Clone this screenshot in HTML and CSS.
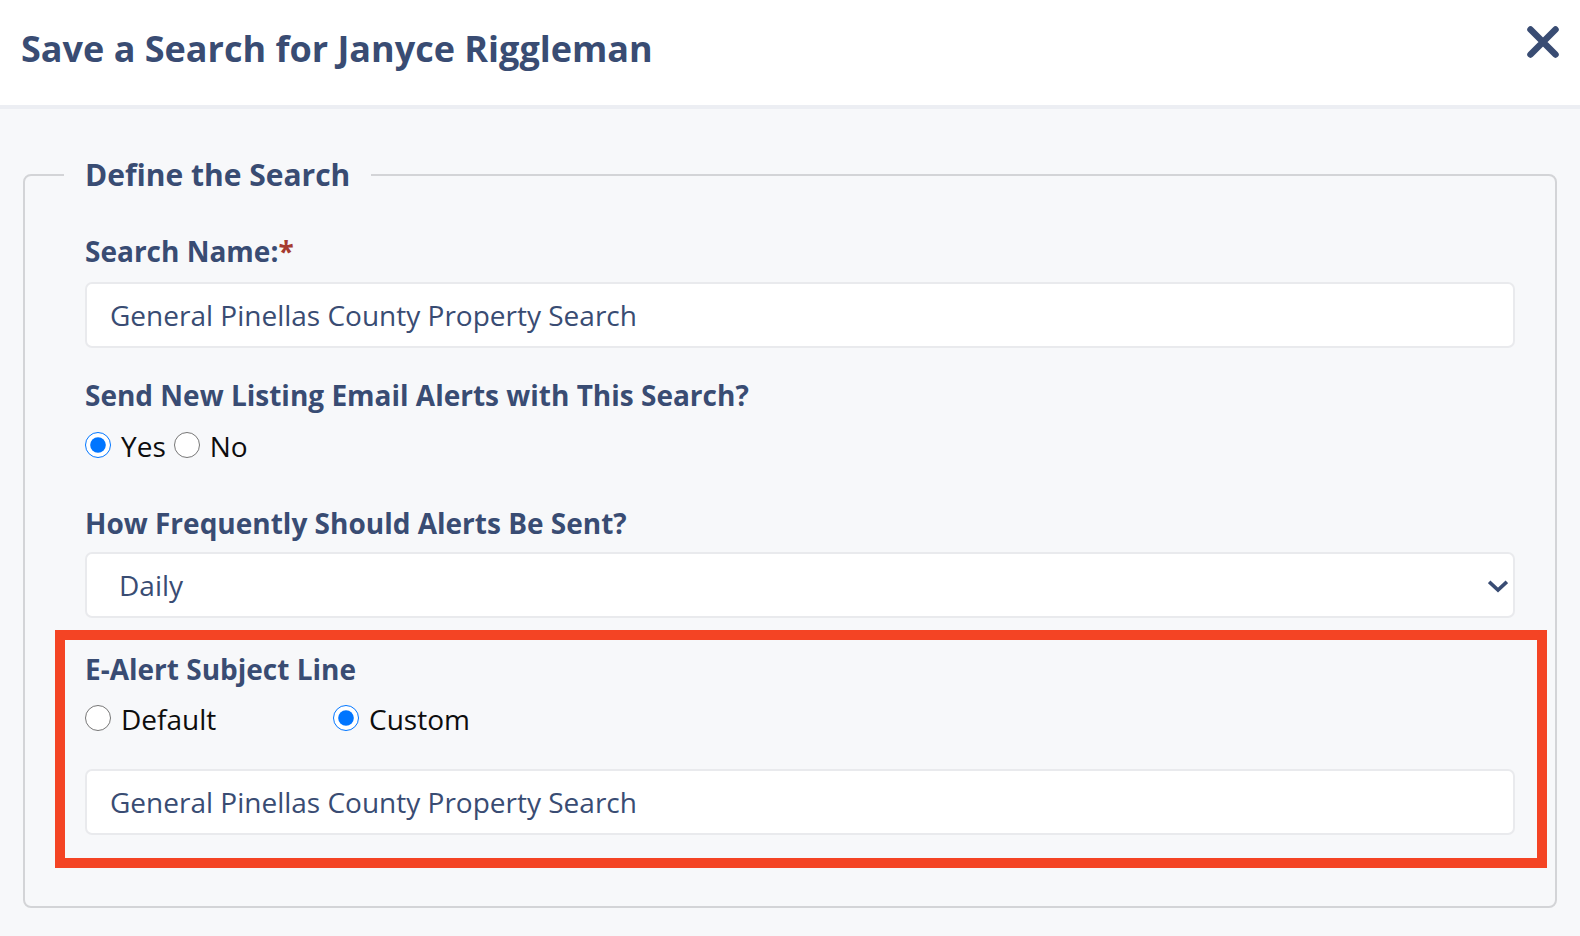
FILE: index.html
```html
<!DOCTYPE html>
<html lang="en">
<head>
<meta charset="utf-8">
<title>Save a Search</title>
<link rel="stylesheet" href="styles.css">
</head>
<body>
<div class="modal">
  <header class="modal-header">
    <h1 class="modal-title">Save a Search for Janyce Riggleman</h1>
    <button class="close-btn" type="button" aria-label="Close">
      <svg viewBox="0 0 32 32" width="32" height="32" aria-hidden="true">
        <path d="M3.5 3.5 L28.5 28.5 M28.5 3.5 L3.5 28.5" stroke="#394c73" stroke-width="6.5" stroke-linecap="round" fill="none"/>
      </svg>
    </button>
  </header>
  <main class="modal-body">
    <fieldset class="search-fieldset">
      <legend class="fieldset-legend">Define the Search</legend>

      <label class="field-label" for="search-name">Search Name:<span class="required">*</span></label>
      <input class="text-input input-name" id="search-name" type="text" value="General Pinellas County Property Search">

      <div class="field-label label-send">Send New Listing Email Alerts with This Search?</div>
      <div class="radio-row">
        <label class="radio-option"><input type="radio" name="alerts" checked><span>Yes</span></label>
        <label class="radio-option radio-no"><input type="radio" name="alerts"><span>No</span></label>
      </div>

      <label class="field-label label-freq" for="freq">How Frequently Should Alerts Be Sent?</label>
      <div class="select-wrap">
        <select class="select-input" id="freq">
          <option>Daily</option>
          <option>Weekly</option>
          <option>Monthly</option>
        </select>
        <svg class="select-chevron" viewBox="0 0 20 14" width="20" height="14" aria-hidden="true">
          <path d="M2.5 3 L10 10 L17.5 3" stroke="#394c73" stroke-width="3.6" fill="none" stroke-linecap="square"/>
        </svg>
      </div>

      <section class="highlight-box">
        <div class="field-label label-subject">E-Alert Subject Line</div>
        <div class="radio-row subject-row">
          <label class="radio-option radio-default"><input type="radio" name="subject"><span>Default</span></label>
          <label class="radio-option"><input type="radio" name="subject" checked><span>Custom</span></label>
        </div>
        <input class="text-input input-subject" type="text" value="General Pinellas County Property Search">
      </section>
    </fieldset>
  </main>
</div>
</body>
</html>
```

FILE: styles.css
```css
* {
  box-sizing: border-box;
}

html, body {
  margin: 0;
  padding: 0;
}

body {
  background: #f7f8fa;
  font-family: "Open Sans", "Noto Sans", "Liberation Sans", sans-serif;
  color: #394c73;
  width: 1580px;
  height: 936px;
  overflow: hidden;
}

.modal-header {
  height: 109px;
  background: #ffffff;
  border-bottom: 4px solid #eceef3;
  display: flex;
  justify-content: space-between;
  align-items: flex-start;
  padding: 27px 21px 0 21px;
}

.modal-title {
  margin: 0;
  font-size: 36px;
  line-height: 43px;
  font-weight: 700;
  color: #394c73;
}

.close-btn {
  border: 0;
  background: transparent;
  padding: 0;
  margin: -1px 0 0 0;
  width: 32px;
  height: 32px;
  cursor: pointer;
  display: flex;
}

.modal-body {
  padding: 46px 23px 0 23px;
}

.search-fieldset {
  margin: 0;
  border: 2px solid #d3d4d7;
  border-radius: 8px;
  padding: 37px 40px 38px 60px;
  display: flex;
  flex-direction: column;
  min-width: 0;
}

.fieldset-legend {
  margin-left: -21px;
  padding: 0 21px;
  font-size: 30px;
  line-height: 39px;
  font-weight: 700;
  color: #394c73;
}

.field-label {
  display: block;
  font-size: 28px;
  line-height: 39px;
  font-weight: 700;
  color: #394c73;
  position: relative;
  top: 1px;
}

.required {
  color: #a63b30;
}

.text-input,
.select-input {
  display: block;
  width: 100%;
  height: 66px;
  border: 2px solid #e9eaed;
  border-radius: 7px;
  background: #ffffff;
  font-family: "Open Sans", "Noto Sans", "Liberation Sans", sans-serif;
  font-size: 28px;
  color: #394c73;
  padding: 0 23px;
  outline: none;
}

.input-name {
  margin-top: 12px;
}

.label-send {
  margin-top: 27px;
}

.radio-row {
  display: flex;
  align-items: center;
  margin-top: 13px;
}

.radio-option {
  display: flex;
  align-items: center;
  font-size: 28px;
  line-height: 39px;
  font-weight: 400;
  color: #0d0d0d;
}

.radio-option input {
  width: 26px;
  height: 26px;
  margin: 0 10px 0 0;
  position: relative;
  top: -2px;
}

.radio-no {
  margin-left: 8px;
}

.label-freq {
  margin-top: 37px;
}

.select-wrap {
  position: relative;
  margin-top: 10px;
}

.select-input {
  appearance: none;
  -webkit-appearance: none;
  padding-left: 32px;
}

.select-chevron {
  position: absolute;
  right: 7px;
  top: 28px;
}

.highlight-box {
  margin: 12px -32px 0 -30px;
  border: 10px solid #f44424;
  padding: 9px 22px 23px 20px;
}

.subject-row {
  margin-top: 12px;
}

.radio-default {
  width: 248px;
}

.input-subject {
  margin-top: 30px;
}
```
